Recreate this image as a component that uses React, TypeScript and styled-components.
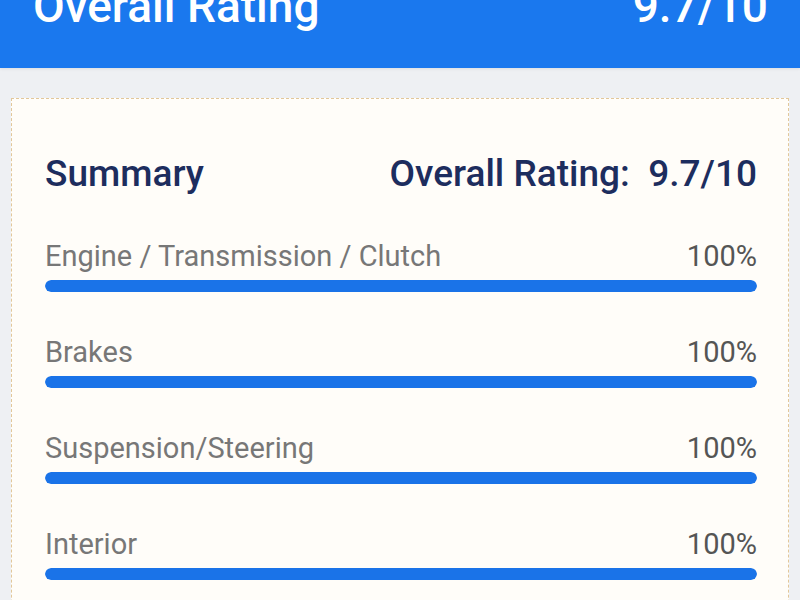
import React from "react";
import styled, { createGlobalStyle } from "styled-components";

const GlobalStyle = createGlobalStyle`
  html, body {
    margin: 0;
    padding: 0;
    background: #eef0f3;
    font-family: Roboto, "Noto Sans", sans-serif;
    overflow: hidden;
  }
`;

const ratings = [
  { label: "Engine / Transmission / Clutch", value: 100 },
  { label: "Brakes", value: 100 },
  { label: "Suspension/Steering", value: 100 },
  { label: "Interior", value: 100 },
  { label: "Exterior", value: 100 },
];

export default function App() {
  return (
    <>
      <GlobalStyle />
      <Page>
        <Header>
          <HeaderTitle>Overall Rating</HeaderTitle>
          <HeaderTitle>9.7/10</HeaderTitle>
        </Header>
        <Card>
          <SummaryRow>
            <SummaryTitle>Summary</SummaryTitle>
            <SummaryTitle>Overall Rating:&nbsp;&nbsp;9.7/10</SummaryTitle>
          </SummaryRow>
          {ratings.map((r) => (
            <RatingItem key={r.label}>
              <RatingHead>
                <Label>{r.label}</Label>
                <Percent>{r.value}%</Percent>
              </RatingHead>
              <Track>
                <Fill style={{ width: `${r.value}%` }} />
              </Track>
            </RatingItem>
          ))}
        </Card>
      </Page>
    </>
  );
}

const Page = styled.div`
  width: 800px;
  height: 600px;
  overflow: hidden;
`;

const Header = styled.header`
  height: 68px;
  background: #1a78ee;
  display: flex;
  justify-content: space-between;
  align-items: flex-start;
  padding: 0 32px 0 33px;
  box-sizing: border-box;
  overflow: hidden;
  box-shadow: 0 1px 3px rgba(0, 0, 0, 0.08);
`;

const HeaderTitle = styled.div`
  color: #ffffff;
  font-size: 46px;
  font-weight: 500;
  line-height: 46px;
  margin-top: -17px;
`;

const Card = styled.section`
  margin: 30px 11px 0 11px;
  border: 1px dashed #e2c79a;
  background: #fffdf9;
  padding: 55px 31px 0 33px;
  height: 600px;
  box-sizing: border-box;
`;

const SummaryRow = styled.div`
  display: flex;
  justify-content: space-between;
  align-items: baseline;
  margin-bottom: 45px;
`;

const SummaryTitle = styled.h2`
  margin: 0;
  color: #1d2d5e;
  font-size: 37px;
  font-weight: 500;
  line-height: 40px;
`;

const RatingItem = styled.div`
  margin-bottom: 43px;
`;

const RatingHead = styled.div`
  display: flex;
  justify-content: space-between;
  align-items: baseline;
  margin-bottom: 7px;
`;

const Label = styled.span`
  color: #777777;
  font-size: 29px;
  line-height: 34px;
`;

const Percent = styled.span`
  color: #555555;
  font-size: 29px;
  line-height: 34px;
`;

const Track = styled.div`
  height: 12px;
  border-radius: 6px;
  background: #dde6f3;
  overflow: hidden;
`;

const Fill = styled.div`
  height: 100%;
  border-radius: 6px;
  background: #1a73e8;
`;
